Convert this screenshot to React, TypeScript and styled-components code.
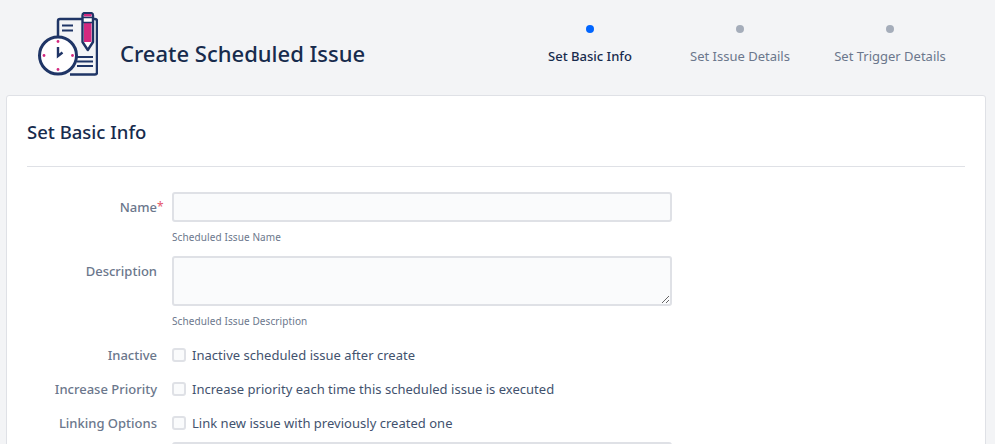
import React from "react";
import styled, { createGlobalStyle } from "styled-components";

const GlobalStyle = createGlobalStyle`
  * {
    box-sizing: border-box;
    font-family: "Noto Sans", "Open Sans", sans-serif;
  }
  html, body {
    margin: 0;
    padding: 0;
    height: 444px;
    overflow: hidden;
    background: #f3f4f6;
  }
`;

const Page = styled.div`
  width: 995px;
  height: 444px;
  overflow: hidden;
  padding: 0 9px 0 6px;
`;

const Header = styled.header`
  height: 95px;
  display: flex;
  align-items: flex-start;
  justify-content: space-between;
`;

const Brand = styled.div`
  display: flex;
  align-items: flex-start;
  padding: 12px 0 0 32px;
  gap: 22px;
`;

const PageTitle = styled.h1`
  margin: 26px 0 0;
  font-size: 22px;
  line-height: 30px;
  font-weight: 500;
  color: #172b4d;
`;

const Steps = styled.div`
  display: flex;
  padding: 25px 21px 0 0;
`;

const Step = styled.div`
  width: 150px;
  display: flex;
  flex-direction: column;
  align-items: center;
  gap: 14px;
`;

const Dot = styled.span<{ $active?: boolean }>`
  width: 8px;
  height: 8px;
  border-radius: 50%;
  background: ${({ $active }) => ($active ? "#0065ff" : "#a5adba")};
`;

const StepLabel = styled.span<{ $active?: boolean }>`
  font-size: 13px;
  line-height: 18px;
  font-weight: ${({ $active }) => ($active ? 500 : 400)};
  color: ${({ $active }) => ($active ? "#172b4d" : "#6b778c")};
`;

const Card = styled.main`
  background: #fff;
  border: 1px solid #dfe1e6;
  border-radius: 3px;
  padding: 0 20px;
  height: 400px;
`;

const CardTitle = styled.h2`
  margin: 0;
  padding: 23px 0 21px;
  font-size: 18.5px;
  line-height: 26px;
  font-weight: 500;
  color: #172b4d;
  border-bottom: 1px solid #dfe1e6;
`;

const Form = styled.div`
  padding-top: 25px;
`;

const Row = styled.div<{ $gap?: number }>`
  display: flex;
  margin-bottom: ${({ $gap }) => $gap ?? 0}px;
`;

const Label = styled.div<{ $top?: number }>`
  width: 130px;
  margin-right: 15px;
  flex: none;
  text-align: right;
  font-size: 13px;
  line-height: 20px;
  font-weight: 500;
  color: #6b778c;
  padding-top: ${({ $top }) => $top ?? 0}px;
  position: relative;
`;

const Required = styled.span`
  position: absolute;
  left: 100%;
  color: #e5566b;
  font-weight: 400;
  font-size: 12px;
`;

const Field = styled.div`
  width: 500px;
`;

const TextInput = styled.input`
  display: block;
  width: 500px;
  height: 30px;
  background: #fafbfc;
  border: 2px solid #dfe1e6;
  border-radius: 3px;
  outline: none;
`;

const TextArea = styled.textarea`
  display: block;
  width: 500px;
  height: 50px;
  background: #fafbfc;
  border: 2px solid #dfe1e6;
  border-radius: 3px;
  outline: none;
  resize: vertical;
`;

const Hint = styled.div`
  margin-top: 8px;
  font-size: 10px;
  line-height: 14px;
  letter-spacing: 0.1px;
  color: #6b778c;
`;

const CheckLine = styled.label`
  display: flex;
  align-items: center;
  height: 20px;
  gap: 6px;
  font-size: 13px;
  letter-spacing: 0.02px;
  color: #42526e;
`;

const CheckBox = styled.input.attrs({ type: "checkbox" })`
  appearance: none;
  margin: 0;
  width: 14px;
  height: 14px;
  background: #fafbfc;
  border: 2px solid #dfe1e6;
  border-radius: 3px;
`;

const navy = "#1f3566";
const pink = "#d3297f";

// coordinates are page pixels, hence the viewBox offset
const Logo = () => (
  <svg width="60" height="64" viewBox="38 12 60 64" fill="none">
    <path d="M58 36V21a2 2 0 0 1 2-2h35a2 2 0 0 1 2 2v51.500a2 2 0 0 1-2 2H70" stroke={navy} strokeWidth="2.500" />
    <path d="M62 25.500h11M62 30.500h11M77 57h16M77 61.500h16M77 66h16" stroke={navy} strokeWidth="2.200" />
    <path d="M82.500 15.500a2.500 2.500 0 0 1 2.500-2.500h5.500a2.500 2.500 0 0 1 2.500 2.500V42l-5.200 8-5.300-8z" fill="#fff" stroke={navy} strokeWidth="2.400" strokeLinejoin="round" />
    <rect x="84" y="23" width="7.500" height="19" fill={pink} />
    <rect x="84" y="14" width="7.500" height="2.500" fill={pink} />
    <path d="M82.500 17.500h10.500M82.500 22.500h10.500" stroke={navy} strokeWidth="1.500" />
    <circle cx="58" cy="55.500" r="18.500" fill="#fff" stroke={navy} strokeWidth="3" />
    <path d="M58 47v9l4.500-3.500" stroke={navy} strokeWidth="2.400" />
    <g fill={pink}>
      <circle cx="58" cy="41.500" r="1.400" />
      <circle cx="58" cy="69.500" r="1.400" />
      <circle cx="44" cy="55.500" r="1.400" />
      <circle cx="72.500" cy="55.500" r="1.400" />
    </g>
  </svg>
);

const App = () => (
  <Page>
    <GlobalStyle />
    <Header>
      <Brand>
        <Logo />
        <PageTitle>Create Scheduled Issue</PageTitle>
      </Brand>
      <Steps>
        <Step>
          <Dot $active />
          <StepLabel $active>Set Basic Info</StepLabel>
        </Step>
        <Step>
          <Dot />
          <StepLabel>Set Issue Details</StepLabel>
        </Step>
        <Step>
          <Dot />
          <StepLabel>Set Trigger Details</StepLabel>
        </Step>
      </Steps>
    </Header>
    <Card>
      <CardTitle>Set Basic Info</CardTitle>
      <Form>
        <Row $gap={12}>
          <Label $top={5}>
            Name<Required>*</Required>
          </Label>
          <Field>
            <TextInput />
            <Hint>Scheduled Issue Name</Hint>
          </Field>
        </Row>
        <Row $gap={17}>
          <Label $top={5}>Description</Label>
          <Field>
            <TextArea />
            <Hint>Scheduled Issue Description</Hint>
          </Field>
        </Row>
        <Row $gap={14}>
          <Label>Inactive</Label>
          <CheckLine>
            <CheckBox />
            Inactive scheduled issue after create
          </CheckLine>
        </Row>
        <Row $gap={14}>
          <Label>Increase Priority</Label>
          <CheckLine>
            <CheckBox />
            Increase priority each time this scheduled issue is executed
          </CheckLine>
        </Row>
        <Row $gap={9}>
          <Label>Linking Options</Label>
          <CheckLine>
            <CheckBox />
            Link new issue with previously created one
          </CheckLine>
        </Row>
        <Row>
          <Label />
          <TextInput />
        </Row>
      </Form>
    </Card>
  </Page>
);

export default App;
